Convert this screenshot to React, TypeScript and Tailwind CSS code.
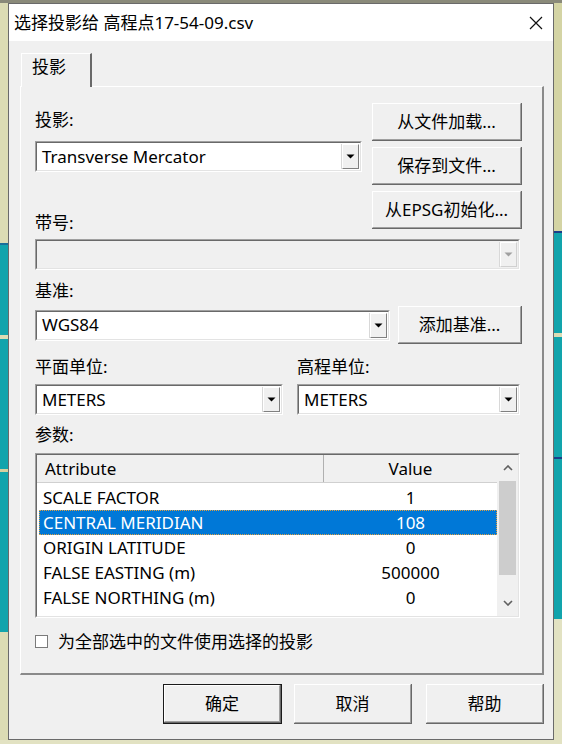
import React from "react";

const FONT = { fontFamily: '"Noto Sans", "Noto Sans CJK SC", sans-serif' };

function Raised({ children, className = "", isDefault = false }: { children: React.ReactNode; className?: string; isDefault?: boolean }) {
  return (
    <div className={`${isDefault ? "border border-[#1a1a1a]" : ""} ${className}`}>
      <div className="h-full w-full border-r border-b border-[#696969]">
        <div className="h-full w-full border-t border-l border-t-white border-l-white border-r border-b border-r-[#a0a0a0] border-b-[#a0a0a0] bg-[#f0f0f0] flex items-center justify-center text-[17px] text-black">
          {children}
        </div>
      </div>
    </div>
  );
}

function Arrow({ disabled = false }: { disabled?: boolean }) {
  return (
    <div className="h-full w-[18px] border-l border-[#d8d8d8]">
      <div className={`h-full w-full border-t border-l border-white border-r border-b ${disabled ? "border-r-[#d0d0d0] border-b-[#d0d0d0]" : "border-r-[#808080] border-b-[#808080]"} bg-[#f0f0f0] flex items-center justify-center`}>
        <svg width="9" height="5" viewBox="0 0 9 5">
          <path d="M0.5 0.5 L8.5 0.5 L4.5 4.5 Z" fill={disabled ? "#a0a0a0" : "#000"} />
        </svg>
      </div>
    </div>
  );
}

function Select({ value, className = "", disabled = false }: { value?: string; className?: string; disabled?: boolean }) {
  return (
    <div className={`h-[31px] border-t border-l border-t-[#a0a0a0] border-l-[#a0a0a0] border-r border-b border-r-white border-b-white ${className}`}>
      <div className={`h-full w-full border-t border-l border-t-[#696969] border-l-[#696969] border-r border-b border-r-[#e3e3e3] border-b-[#e3e3e3] ${disabled ? "bg-[#f0f0f0]" : "bg-white"} flex items-stretch p-[1px]`}>
        <div className="flex-1 flex items-center pl-[4px] text-[17px] text-black">{value}</div>
        <Arrow disabled={disabled} />
      </div>
    </div>
  );
}

function Label({ children, className = "" }: { children: React.ReactNode; className?: string }) {
  return <div className={`h-[20px] leading-[20px] text-[17px] text-black ${className}`}>{children}</div>;
}

const rows: [string, string][] = [
  ["SCALE FACTOR", "1"],
  ["CENTRAL MERIDIAN", "108"],
  ["ORIGIN LATITUDE", "0"],
  ["FALSE EASTING (m)", "500000"],
  ["FALSE NORTHING (m)", "0"],
];

function ParamList() {
  return (
    <div className="h-[165px] border-t border-l border-t-[#a0a0a0] border-l-[#a0a0a0] border-r border-b border-r-white border-b-white">
      <div className="h-full w-full border-t border-l border-t-[#696969] border-l-[#696969] border-r border-b border-r-[#e3e3e3] border-b-[#e3e3e3] bg-white flex">
        <div className="flex-1 flex flex-col">
          <div className="h-[28px] flex border-b border-[#d0d0d0] bg-[#f0f0f0] text-[17px]">
            <div className="w-[287px] border-r border-[#b0b0b0] flex items-center pl-[8px]">Attribute</div>
            <div className="flex-1 flex items-center justify-center">Value</div>
          </div>
          <div className="flex flex-col pt-[2px] pl-[2px]">
            {rows.map(([a, v], i) => {
              const sel = i === 1;
              return (
                <div
                  key={a}
                  className={`h-[25px] flex text-[17px] ${sel ? "bg-[#0078d7] text-white outline outline-1 outline-dotted outline-[#e0a040] -outline-offset-1" : "text-black"}`}
                >
                  <div className="w-[285px] flex items-center pl-[4px]">{a}</div>
                  <div className="flex-1 flex items-center justify-center">{v}</div>
                </div>
              );
            })}
          </div>
        </div>
        <div className="w-[21px] bg-[#f0f0f0] flex flex-col items-center">
          <div className="h-[26px] flex items-center justify-center">
            <svg width="10" height="6" viewBox="0 0 10 6"><path d="M1 5 L5 1 L9 5" stroke="#606060" strokeWidth="1.6" fill="none" /></svg>
          </div>
          <div className="w-[17px] h-[94px] bg-[#cdcdcd]" />
          <div className="flex-1" />
          <div className="h-[26px] flex items-center justify-center">
            <svg width="10" height="6" viewBox="0 0 10 6"><path d="M1 1 L5 5 L9 1" stroke="#606060" strokeWidth="1.6" fill="none" /></svg>
          </div>
        </div>
      </div>
    </div>
  );
}

function Strip({ segments }: { segments: [string, number][] }) {
  return (
    <div className="flex flex-col w-full h-full">
      {segments.map(([c, h], i) => (
        <div key={i} style={{ background: c, height: h }} />
      ))}
    </div>
  );
}

export default function App() {
  return (
    <div className="w-[562px] h-[744px] flex flex-col bg-[#e2e2c2] overflow-hidden" style={FONT}>
      <div className="h-[3px] bg-[#8a8a7a]" />
      <div className="flex h-[737px]">
        <div className="w-[8px]">
          <Strip
            segments={[
              ["#dcdcb4", 240],
              ["#1b6f9a", 2],
              ["#12a4ac", 90],
              ["#dcdcb4", 4],
              ["#12a4ac", 130],
              ["#d8d0a0", 3],
              ["#12a4ac", 160],
              ["#dcdcb4", 108],
            ]}
          />
        </div>
        <div className="w-[546px] h-[737px] border border-[#6a6a6a] bg-[#f0f0f0] flex flex-col">
          <div className="h-[37px] bg-white flex items-center justify-between pl-[5px] pr-[10px]">
            <div className="text-[17px] text-black">选择投影给 高程点17-54-09.csv</div>
            <svg width="14" height="14" viewBox="0 0 14 14">
              <path d="M1 1 L13 13 M13 1 L1 13" stroke="#111" strokeWidth="1.2" />
            </svg>
          </div>
          <div className="flex-1 flex flex-col pl-[11px] pr-[9px] pt-[12px]">
            {/* tab header */}
            <div className="flex pl-[1px]">
              <div className="w-[71px] h-[34px] border-t border-l border-white border-r-2 border-r-[#696969] bg-[#f0f0f0] flex items-center pl-[10px] pb-[8px] text-[17px] -mb-[1px] relative z-10">
                投影
              </div>
            </div>
            {/* tab page */}
            <div className="h-[589px] border-t border-l border-white border-r-2 border-b-2 border-r-[#8a8a8a] border-b-[#8a8a8a] flex flex-col pl-[14px] pr-[19px] pt-[16px]">
              <div className="flex gap-[10px]">
                <div className="w-[327px] flex flex-col">
                  <Label className="mt-[7px]">投影:</Label>
                  <Select value="Transverse Mercator" className="mt-[11px]" />
                  <Label className="mt-[41px]">带号:</Label>
                </div>
                <div className="flex flex-col gap-[6px]">
                  <Raised className="w-[150px] h-[38px]">从文件加载...</Raised>
                  <Raised className="w-[150px] h-[38px]">保存到文件...</Raised>
                  <Raised className="w-[150px] h-[38px]">从EPSG初始化...</Raised>
                </div>
              </div>
              <Select disabled className="mt-[6px] w-[485px]" />
              <Label className="mt-[11px]">基准:</Label>
              <div className="flex items-center gap-[8px] mt-[5px]">
                <Select value="WGS84" className="w-[355px]" />
                <Raised className="w-[124px] h-[38px]">添加基准...</Raised>
              </div>
              <div className="flex gap-[14px] mt-[13px]">
                <div className="w-[248px] flex flex-col">
                  <Label>平面单位:</Label>
                  <Select value="METERS" className="mt-[7px]" />
                </div>
                <div className="w-[223px] flex flex-col">
                  <Label>高程单位:</Label>
                  <Select value="METERS" className="mt-[7px]" />
                </div>
              </div>
              <Label className="mt-[10px]">参数:</Label>
              <div className="mt-[8px] w-[485px]">
                <ParamList />
              </div>
              <div className="flex items-center mt-[11px] gap-[10px]">
                <div className="w-[13px] h-[13px] border border-[#7a7a7a] bg-white" />
                <div className="text-[17px] text-black">为全部选中的文件使用选择的投影</div>
              </div>
            </div>
            {/* dialog buttons */}
            <div className="flex justify-end mt-[9px]">
              <Raised isDefault className="w-[119px] h-[40px]">确定</Raised>
              <Raised className="w-[118px] h-[40px] ml-[12px]">取消</Raised>
              <Raised className="w-[118px] h-[40px] ml-[14px]">帮助</Raised>
            </div>
          </div>
        </div>
        <div className="w-[8px]">
          <Strip
            segments={[
              ["#d4d4a4", 228],
              ["#1b3f8a", 2],
              ["#12a4ac", 100],
              ["#dcdcb4", 4],
              ["#12a4ac", 120],
              ["#1b3f8a", 2],
              ["#12a4ac", 160],
              ["#e2e2c2", 121],
            ]}
          />
        </div>
      </div>
      <div className="flex-1 bg-[#e2e2c2]" />
    </div>
  );
}
